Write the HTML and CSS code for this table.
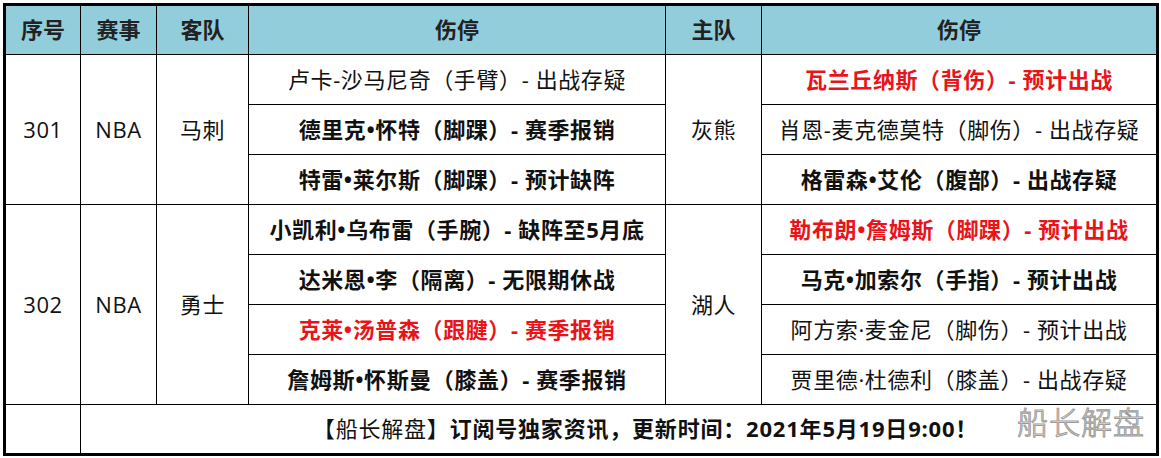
FILE: index.html
```html
<!DOCTYPE html>
<html lang="zh-CN">
<head>
<meta charset="utf-8">
<title>伤停</title>
<link rel="stylesheet" href="styles.css">
</head>
<body>
<div class="sheet">
  <div class="grid">
    <div class="cell head">序号</div>
    <div class="cell head">赛事</div>
    <div class="cell head">客队</div>
    <div class="cell head">伤停</div>
    <div class="cell head">主队</div>
    <div class="cell head">伤停</div>

    <div class="cell span3">301</div>
    <div class="cell span3">NBA</div>
    <div class="cell span3">马刺</div>
    <div class="cell">卢卡-沙马尼奇（手臂）- 出战存疑</div>
    <div class="cell span3">灰熊</div>
    <div class="cell b red">瓦兰丘纳斯（背伤）- 预计出战</div>
    <div class="cell b">德里克•怀特（脚踝）- 赛季报销</div>
    <div class="cell">肖恩-麦克德莫特（脚伤）- 出战存疑</div>
    <div class="cell b">特雷•莱尔斯（脚踝）- 预计缺阵</div>
    <div class="cell b">格雷森•艾伦（腹部）- 出战存疑</div>

    <div class="cell span4">302</div>
    <div class="cell span4">NBA</div>
    <div class="cell span4">勇士</div>
    <div class="cell b">小凯利•乌布雷（手腕）- 缺阵至5月底</div>
    <div class="cell span4">湖人</div>
    <div class="cell b red">勒布朗•詹姆斯（脚踝）- 预计出战</div>
    <div class="cell b">达米恩•李（隔离）- 无限期休战</div>
    <div class="cell b">马克•加索尔（手指）- 预计出战</div>
    <div class="cell b red">克莱•汤普森（跟腱）- 赛季报销</div>
    <div class="cell">阿方索·麦金尼（脚伤）- 预计出战</div>
    <div class="cell b">詹姆斯•怀斯曼（膝盖）- 赛季报销</div>
    <div class="cell">贾里德·杜德利（膝盖）- 出战存疑</div>

    <div class="cell"></div>
    <div class="cell foot"><span class="normal">【船长解盘】</span>订阅号独家资讯，更新时间：2021年5月19日9:00！</div>
  </div>
  <div class="mark">船长解盘</div>
</div>
</body>
</html>
```

FILE: styles.css
```css
html, body {
  margin: 0;
  padding: 0;
  background: #ffffff;
}

body {
  font-family: "Open Sans", "Noto Sans CJK SC", sans-serif;
  color: #111;
}

.sheet {
  position: relative;
  width: 1156px;
  margin: 3px 0 0 3px;
}

.grid {
  display: grid;
  grid-template-columns: 74px 75px 91px 416px 95px 394px;
  grid-template-rows: 48px repeat(7, 49px) 48px;
  gap: 1px;
  background: #000;
  border: 3px solid #000;
}

.cell {
  background: #fff;
  display: flex;
  align-items: center;
  justify-content: center;
  font-size: 22px;
  white-space: nowrap;
  line-height: 1;
  padding-bottom: 2px;
  box-sizing: border-box;
  letter-spacing: 0.6px;
  text-spacing-trim: space-all;
}

.head {
  background: #92cddc;
  font-weight: 700;
  color: #222;
  letter-spacing: 0;
}

.span3 { grid-row: span 3; }
.span4 { grid-row: span 4; }

.b { font-weight: 700; }
.red { color: #e8141a; }

.foot {
  grid-column: span 5;
  font-weight: 700;
  padding-left: 54px;
  letter-spacing: 0.8px;
}

.normal { font-weight: 400; }

.mark {
  position: absolute;
  right: 14px;
  bottom: 13px;
  font-family: "Noto Sans CJK SC", sans-serif;
  font-weight: 300;
  font-size: 31px;
  letter-spacing: 1px;
  color: #ffffff;
  -webkit-text-stroke: 1px #9a9a9a;
}
```
